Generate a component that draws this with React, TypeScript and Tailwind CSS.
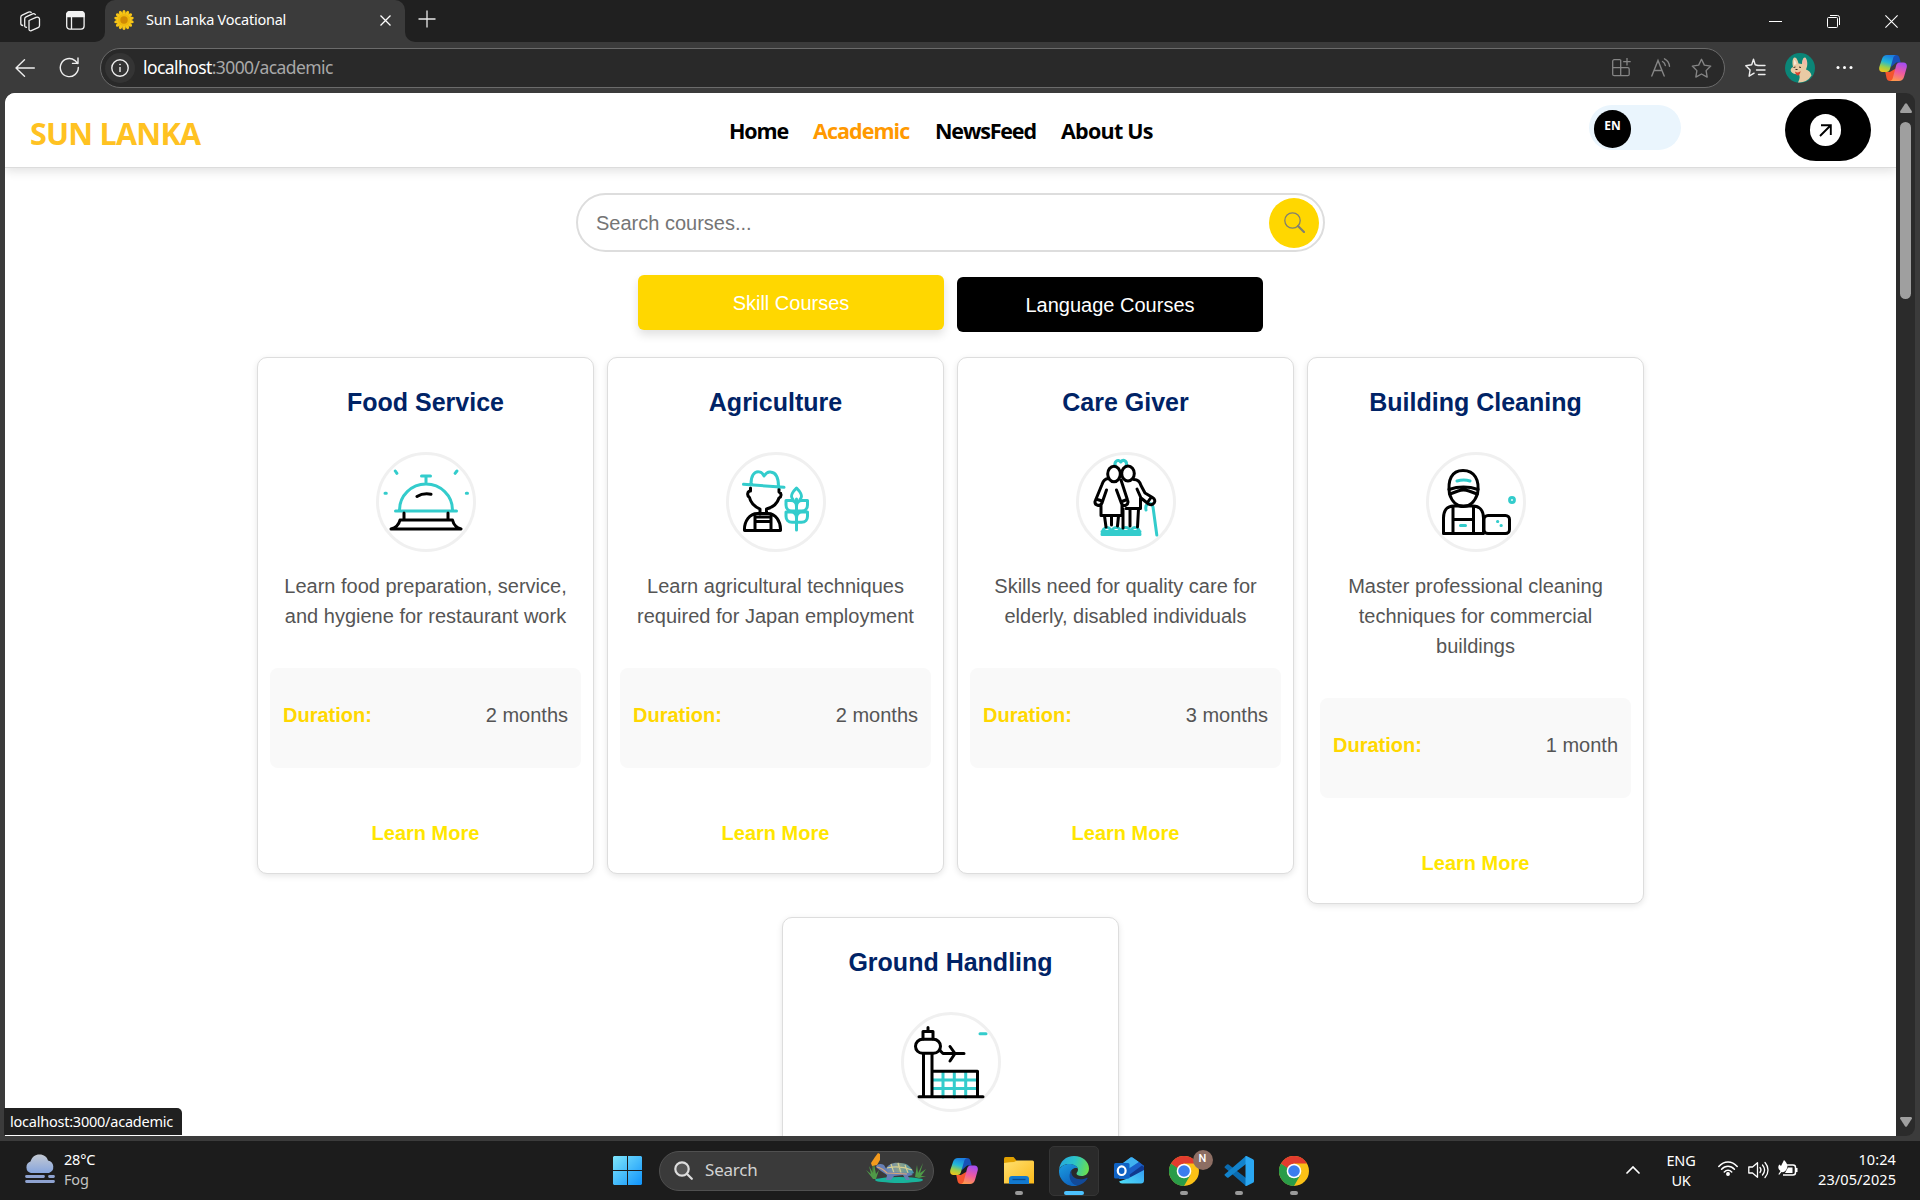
import React from "react";

const UI = "font-['Noto_Sans',sans-serif]";

const TEAL = "#33cccc";

function CopilotIcon({ id }: { id: string }) {
  return (
    <svg width="28" height="26" viewBox="0 0 28 26">
      <defs>
        <linearGradient id={`${id}a`} x1="0.5" y1="0" x2="0.2" y2="1">
          <stop offset="0" stopColor="#1b7fe0" />
          <stop offset="0.4" stopColor="#22b8d8" />
          <stop offset="0.7" stopColor="#9ccf4a" />
          <stop offset="1" stopColor="#f5c518" />
        </linearGradient>
        <linearGradient id={`${id}b`} x1="0.6" y1="0" x2="0.3" y2="1">
          <stop offset="0" stopColor="#a64df0" />
          <stop offset="0.5" stopColor="#ee5aa0" />
          <stop offset="1" stopColor="#ff9a4a" />
        </linearGradient>
      </defs>
      <path d="M12 0h5c2 0 3 1 3.500 3l1.200 4.500h-4.500L12 12z" fill="#1750b8" />
      <path d="M16 26h-5c-2 0-3-1-3.500-3L6.300 17h4.500L16 14z" fill="#f4552d" />
      <path d="M8 0h9.500c-2 .2-2.800 1.300-3.300 3L11 14c-.6 2-1.600 3-3.600 3H3.500C.8 17-.3 15 .3 12L3 4c.8-2.500 2.500-4 5-4z" fill={`url(#${id}a)`} />
      <path d="M20 26h-9.500c2-.2 2.800-1.300 3.300-3L17 11c.6-2.200 1.600-3.500 3.600-3.500h3.900c2.700 0 3.800 2 3.200 5L25 22c-.8 2.500-2.500 4-5 4z" fill={`url(#${id}b)`} />
    </svg>
  );
}

function TabBar() {
  return (
    <div className="flex h-[42px] bg-[#3b3b3b] text-white">
      <div className="flex w-[105px] items-center rounded-br-[10px] bg-[#202020] pl-5">
        <svg width="21" height="21" viewBox="0 0 21 21" fill="none" stroke="#f2f2f2" strokeWidth="1.300" strokeLinejoin="round">
          <path d="M9 9.500l7-3.200c1.500-.6 3.500 0 3.500 1.800v6.500c0 1-.4 1.700-1.400 2.100l-6.800 3c-1.300.5-2.300-.3-2.300-1.500z" />
          <path d="M7 16.200c-1.400.4-2.300-.3-2.300-1.500V8c0-1 .5-1.700 1.400-2.100l6.500-3c1.300-.5 2.600 0 3 1.200" />
          <path d="M3.200 14.500C1.800 14.500.8 13.700.8 12.500V6.200c0-1 .5-1.700 1.400-2.100L8.500 1.200c1.200-.5 2.500-.2 3 .6" />
        </svg>
        <svg className="-mt-px ml-[25px]" width="19" height="19" viewBox="0 0 19 19" fill="none" stroke="#f2f2f2" strokeWidth="1.300">
          <rect x="0.700" y="0.700" width="17.400" height="17.400" rx="3" />
          <path d="M.7 5.500V3.700a3 3 0 0 1 3-3h11.400a3 3 0 0 1 3 3v1.800z" fill="#f2f2f2" />
          <path d="M5.500 5.500v12.600" />
        </svg>
      </div>
      <div className="w-[300px] bg-[#202020]">
        <div className="flex h-full items-center rounded-t-[10px] bg-[#3b3b3b] pl-[9px] pr-[14px]">
          <svg className="-mt-0.5" width="20" height="20" viewBox="-10 -10 20 20">
            {Array.from({ length: 14 }, (_, i) => (
              <ellipse key={i} cx="0" cy="-6.500" rx="1.700" ry="3.500" fill="#f7c516" transform={`rotate(${(i * 360) / 14})`} />
            ))}
            <circle r="6" fill="#f0b90d" />
            <circle r="3.700" fill="#d08a04" />
          </svg>
          <span className={`${UI} ml-[12px] -mt-0.5 text-[14.500px] tracking-[-0.24px]`}>Sun Lanka Vocational</span>
          <svg className="-mt-px ml-auto" width="11" height="11" viewBox="0 0 11 11" stroke="#fff" strokeWidth="1.300">
            <path d="M.5.5l10 10M10.500.5l-10 10" />
          </svg>
        </div>
      </div>
      <div className="flex flex-1 items-center rounded-bl-[10px] bg-[#202020] pl-[13px] pr-[22px]">
        <svg className="-mt-1" width="18" height="18" viewBox="0 0 18 18" stroke="#e8e8e8" strokeWidth="1.300">
          <path d="M9 .5v17M.5 9h17" />
        </svg>
        <svg className="ml-auto mr-[45px]" width="13" height="13" viewBox="0 0 13 13" stroke="#fff"><path d="M0 6.500h13" /></svg>
        <svg className="mr-[45px]" width="13" height="13" viewBox="0 0 13 13" fill="none" stroke="#fff">
          <rect x="0.500" y="2.500" width="10" height="10" rx="1" />
          <path d="M3 .5h7.500a2 2 0 0 1 2 2V10" />
        </svg>
        <svg width="13" height="13" viewBox="0 0 13 13" stroke="#fff" strokeWidth="1.100"><path d="M.4.4l12.200 12.200M12.600.4L.4 12.600" /></svg>
      </div>
    </div>
  );
}

const STAR = "M10 1.200l2.700 5.600 6.100.9-4.400 4.300 1 6.100L10 15.200l-5.400 2.900 1-6.100L1.200 7.700l6.100-.9z";

function Toolbar() {
  return (
    <div className="flex h-[51px] items-center bg-[#3b3b3b] pl-[15px]">
      <svg width="20" height="18" viewBox="0 0 20 18" fill="none" stroke="#eee" strokeWidth="1.400" strokeLinecap="round" strokeLinejoin="round">
        <path d="M19.300 9H1M9.500.8L1 9l8.500 8.200" />
      </svg>
      <svg className="ml-[24px] mr-px" width="21" height="21" viewBox="0 0 21 21" fill="none" stroke="#eee" strokeWidth="1.400" strokeLinecap="round" strokeLinejoin="round">
        <path d="M19.300 10.500a9 9 0 1 1-3.300-6.900l2.800 2.800M19 1v5.400h-5.500" />
      </svg>
      <div className="ml-[19px] flex h-10 w-[1625px] items-center rounded-full border border-[#6b6b6b] bg-[#292929] pl-[4px] pr-[12px]">
        <div className="grid size-[30px] place-items-center rounded-full bg-[#343434]">
          <svg width="18" height="18" viewBox="0 0 18 18" fill="none" stroke="#eee" strokeWidth="1.400">
            <circle cx="9" cy="9" r="8.200" /><path d="M9 8v5" /><circle cx="9" cy="5.500" r="0.500" fill="#eee" strokeWidth="0.800" />
          </svg>
        </div>
        <span className={`${UI} ml-2 -mt-px text-[17.500px] tracking-[-0.58px] text-[#a8a8a8]`}><span className="text-white">localhost</span>:3000/academic</span>
        <div className="ml-auto flex items-center gap-[20px]">
          <svg width="19" height="19" viewBox="0 0 19 19" fill="none" stroke="#858585" strokeWidth="1.300" strokeLinejoin="round">
            <path d="M8.500 1.700H2.200A1.500 1.500 0 0 0 .7 3.200v13a1.500 1.500 0 0 0 1.500 1.500h13.500a1.500 1.500 0 0 0 1.500-1.500v-5a1.500 1.500 0 0 0-1.500-1.500H.7M8.700 1.700v16M15 0v7.500M11.200 3.700h7.500" />
          </svg>
          <svg width="20" height="20" viewBox="0 0 20 20" fill="none" stroke="#858585" strokeWidth="1.400" strokeLinecap="round">
            <path d="M.8 18L7 2.500 13.200 18M3 12.500h8M11.500 3.500c1.500.8 2.500 2.200 2.800 4M13.500.8c2.800 1.500 4.700 4 5 7.500" />
          </svg>
          <svg width="21" height="20" viewBox="0 0 20 19" fill="none" stroke="#858585" strokeWidth="1.300" strokeLinejoin="round"><path d={STAR} /></svg>
        </div>
      </div>
      <svg className="ml-5" width="21" height="20" viewBox="0 0 21 20" fill="none" stroke="#eee" strokeWidth="1.400" strokeLinejoin="round" strokeLinecap="round">
        <path d="M13 7.500L10.200 6.800 8.500 1.200 6.700 6.800.8 7.700l4.300 4.200-1 6.300 5-3M13.500 7.500H20M11.500 12H20M13.500 16.500H20" />
      </svg>
      <svg className="ml-[19px]" width="30" height="30" viewBox="0 0 30 30">
        <circle cx="15" cy="15" r="15" fill="#0b8577" />
        <path d="M8 14C7 9 7.500 5 9.500 4.500S13 8 13.500 10.500L17 11c0-4 1.500-7 3-6.500s3 5 2 9l-1 3c3 1 5 3 5.500 6A15 15 0 0 1 13 29.500c2-4 2-6 1-8-4 0-7-1-8-3S6 15 8 14z" fill="#e9caa4" />
        <path d="M17.500 10c0-3 1.500-5.500 2.500-5s2 4 1.300 7.500z" fill="#f3b8a8" />
        <path d="M9 7c1 0 2 2 2.500 4L9 12z" fill="#f8ead8" />
        <path d="M10 18.500c2 1.500 4.500 1.200 5.500-.7 0 3-1.500 4.700-2.700 4.700s-2.500-2-2.800-4z" fill="#d8432e" />
        <path d="M8.500 14.500l2-.5M14 14l2 .5M10.500 16.500h2" stroke="#3a2a20" strokeWidth="1" />
      </svg>
      <svg className="ml-[21px]" width="17" height="5" viewBox="0 0 17 5" fill="#fff">
        <circle cx="2" cy="2.500" r="1.500" /><circle cx="8.500" cy="2.500" r="1.500" /><circle cx="15" cy="2.500" r="1.500" />
      </svg>
      <div className="ml-[26px]"><CopilotIcon id="cpTop" /></div>
    </div>
  );
}

function SiteHeader() {
  return (
    <header className="relative flex h-[75px] shrink-0 items-start border-b border-[#dcdcdc] bg-white shadow-[0_3px_10px_rgba(0,0,0,0.12)]">
      <div className="ml-[25px] mt-[19px] w-[699px] font-['Open_Sans',sans-serif] text-[30.500px] font-bold leading-[42px] tracking-[-0.75px] text-[#ffc222]">SUN LANKA</div>
      <nav className="mt-[23px] flex whitespace-nowrap font-['Open_Sans',sans-serif] text-[21.500px] font-bold leading-[30px] text-black">
        <a className="w-[84px] tracking-[-1.1px]">Home</a>
        <a className="w-[122px] tracking-[-0.95px] text-[#ff9900]">Academic</a>
        <a className="w-[126px] tracking-[-1.15px]">NewsFeed</a>
        <a className="w-[97px] tracking-[-0.75px]">About Us</a>
      </nav>
      <div className="ml-auto mr-[104px] mt-[12px] h-[45px] w-[92px] rounded-full bg-[#eaf5fd] pl-[5px] pt-[5px]">
        <div className="grid h-[38px] w-[37px] place-items-center rounded-full bg-black pb-1.5 font-['Noto_Sans',sans-serif] text-[12px] font-bold leading-none text-white">EN</div>
      </div>
      <div className="mr-[25px] mt-[6px] grid h-[62px] w-[86px] place-items-center rounded-full bg-black pr-[5px]">
        <div className="grid h-8 w-[31px] place-items-center rounded-full bg-white">
          <svg width="13" height="13" viewBox="0 0 13 13" fill="none" stroke="#000" strokeWidth="1.900"><path d="M1 12L11.500 1.500M2 1.200h9.800V11" /></svg>
        </div>
      </div>
    </header>
  );
}

function BellArt() {
  return (
    <>
      <g stroke={TEAL}>
        <path d="M45.500 24h9M50 24v8M23.500 58a26.500 26 0 0 1 53 0M19.500 59h61M19.300 19l1.600 2.300M80.900 19l-1.800 2.300M9 41.300h1.300M90.300 41.300h1.200" />
      </g>
      <path d="M41 44.500c4-2.500 9-3.200 14-2.300M28 61v7M72 61v7M24 68h52.500c1 4.500 3.500 7.500 8.500 9H15c5-1.500 8-4.500 9-9z" stroke="#000" />
    </>
  );
}

function FarmerArt() {
  return (
    <>
      <g stroke="#000">
        <path d="M24.500 36v3c-3 0-4 4.500-1 6.500 1 5 5 9 10.500 11.500v5M53 37v3c2.500 1 3 4.500 0 6-1.500 5-5 9-12.500 11v4" />
        <path d="M18.500 78.500c-.5-9 5-17 13-17H42c7.500 0 13 8 12.500 17zM29 63v15.500M45 63v15.500M29 69.500h16M31 65h12" />
      </g>
      <g stroke={TEAL}>
        <path d="M17.500 32.300L58 35.300M25 32c0-8 3-12.500 7.500-12.300 3 0 4.500 2 5.500 4.300 2-3 4-4.500 6.500-4 6 .5 8 6 8 14.500" />
        <path d="M70.500 78V47M70.500 36c-6 6-6 9-3.500 11.500M70.500 36c6 6 6 9 3.500 11.500" />
        <path d="M70.500 59H66c-4 0-6-3-6-6v-4.500h5c4 0 5.500 3 5.500 6 0-3 1.500-6 5.500-6h5.500V53c0 3-2 6-6 6zM70.500 70.300H66c-4 0-6-3-6-6V60h5c4 0 5.500 3 5.500 6 0-3 1.500-6 5.500-6h5.500v4.300c0 3-2 6-6 6z" />
      </g>
    </>
  );
}

function CareArt() {
  return (
    <>
      <g stroke={TEAL}>
        <path d="M39.500 14.500c-2-5 2.500-8 5.200-4.500 2.800-3.500 7.300-.5 5.300 4.500" />
        <path d="M26 82.500h38M26 82.500c0-9 9.500-9 9.500-1 0-8 9.500-8 9.500 0 0-8 9.500-8 9.500 0 0-8 9.500-8 9.500 1M26 79.500h38" />
        <path d="M70 58c-1.500-7 6-9 7-3l3.800 28" />
      </g>
      <g stroke="#000">
        <ellipse cx="38" cy="22" rx="6.300" ry="7.800" />
        <ellipse cx="52" cy="21.500" rx="6.300" ry="7.500" />
        <path d="M32 26.500c-3 .5-5 2.500-6 6l-7 17c-.5 4 5 5.500 7 1.500l4.500-13M20 47l6 2M25 53v10.500h21V53M45 28l6.500 20c2 5-4 7.500-6 3.500l-5-13.500M46 49.500l5-2" />
        <path d="M58 27.500c4 0 6 2.500 7 6l4 7.500 7.500 4.500c5 3 1 9-4 6.500L65 46l-4-9M75 45.500l-3.500 5M64.500 46v10.500H50" />
        <path d="M28.500 64l1.500 11M35.500 64v9M42.500 64l-1 10M47 57v19M54 57v17M62.500 57l-1 18" />
      </g>
    </>
  );
}

function CleanerArt() {
  return (
    <>
      <g stroke="#000">
        <path d="M23.500 42c-2-14 2-23.500 13.500-23.500S54 28 51.500 42c-3 8-8 12.500-14 12.500S26 50 23.500 42z" />
        <path d="M23 37.500c9-3 20-3 29 0M24 42l8-3c4-1.500 7-1.500 11 0l8 3" />
        <path d="M17.500 81.500V66c0-8 4-12 10-12h19.500c6 0 10.500 4 10.500 12v15.500zM27 55v26.500M47.500 55v26.500M27 67.500h20.500" />
        <rect x="58" y="63.500" width="25.500" height="18" rx="4" />
      </g>
      <g stroke={TEAL}>
        <path d="M31 29c4.500-1.300 9-1.300 13 0M34.500 73.500h5M71.500 69.500h.3M75 73.500h.3" />
        <circle cx="86" cy="48" r="2.400" />
      </g>
    </>
  );
}

function AirportArt() {
  return (
    <>
      <path d="M42 60v25M53.300 60v25M64.700 60v25M32 68h44M32 76.500h44M79 21.700h6" stroke={TEAL} />
      <g stroke="#000">
        <path d="M27 15.500V19M22 27v-7.500h10V27" />
        <rect x="14.500" y="27.300" width="25" height="14" rx="7" />
        <path d="M22.500 41.500V84M31 41.500V84M31 59.200h45.500V84M18 84.700h64M39 38.500l3 3h21M49 34.500l5 7-5 7.500" />
      </g>
    </>
  );
}

type Course = { title: string; text?: string[]; duration?: string; Art: () => React.ReactElement };

const courses: Course[] = [
  { title: "Food Service", text: ["Learn food preparation, service,", "and hygiene for restaurant work"], duration: "2 months", Art: BellArt },
  { title: "Agriculture", text: ["Learn agricultural techniques", "required for Japan employment"], duration: "2 months", Art: FarmerArt },
  { title: "Care Giver", text: ["Skills need for quality care for", "elderly, disabled individuals"], duration: "3 months", Art: CareArt },
  { title: "Building Cleaning", text: ["Master professional cleaning", "techniques for commercial", "buildings"], duration: "1 month", Art: CleanerArt },
  { title: "Ground Handling", Art: AirportArt },
];

function CourseCard({ title, text, duration, Art }: Course) {
  return (
    <article className="min-h-[517px] w-[337px] rounded-[10px] border border-[#dddddd] bg-white px-3 text-center shadow-[0_2px_6px_rgba(0,0,0,0.10)]">
      <h3 className="mt-[29px] text-[25px] font-bold leading-[30px] text-[#002366]">{title}</h3>
      <div className="mx-auto mt-[35px] size-[100px] rounded-full border-[3px] border-[#f0f0f0]">
        <svg className="-ml-[3px] -mt-[3px] size-[100px]" viewBox="0 0 100 100" fill="none" strokeWidth="3" strokeLinecap="round" strokeLinejoin="round"><Art /></svg>
      </div>
      {text && (
        <div className="mt-[19px] text-[20px] leading-[30px] text-[#555555]">
          {text.map((t) => <div key={t} className="whitespace-nowrap">{t}</div>)}
        </div>
      )}
      {duration && (
        <>
          <div className="mt-[37px] flex h-[100px] justify-between rounded-[8px] bg-[#f9f9f9] px-[13px] pt-8 text-[20px] leading-[30px]">
            <span className="font-bold text-[#ffd700]">Duration:</span>
            <span className="text-[#555555]">{duration}</span>
          </div>
          <div className="mb-[25px] mt-[50px] text-[20px] font-bold leading-[30px] text-[#ffe600]">Learn More</div>
        </>
      )}
    </article>
  );
}

function Page() {
  return (
    <div className="flex h-[1043px] w-[1891px] flex-col overflow-hidden rounded-tl-[10px] bg-white font-['Liberation_Sans',Arial,sans-serif]">
      <SiteHeader />
      <div className="mx-auto mt-[25px] flex h-[59px] w-[749px] shrink-0 items-center rounded-full border-2 border-[#dddddd] pl-[18px] pr-[4px]">
        <span className="text-[20px] text-[#757575]">Search courses...</span>
        <div className="ml-auto grid size-[50px] place-items-center rounded-full bg-[#ffd700]">
          <svg width="21" height="21" viewBox="0 0 21 21" fill="none" stroke="#808070">
            <circle cx="8.500" cy="8.500" r="7.700" strokeWidth="1.300" /><path d="M14 14l6 6" strokeWidth="2.200" strokeLinecap="round" />
          </svg>
        </div>
      </div>
      <div className="mt-[23px] flex shrink-0 justify-center gap-[13px] text-[20px] text-white">
        <button className="h-[55px] w-[306px] rounded-[6px] bg-[#ffd700] shadow-[0_5px_10px_rgba(0,0,0,0.12)]">Skill Courses</button>
        <button className="mt-[2px] h-[55px] w-[306px] rounded-[6px] bg-black">Language Courses</button>
      </div>
      <main className="mt-[25px] flex flex-wrap items-start justify-center gap-[13px] px-[240px]">
        {courses.map((c) => <CourseCard key={c.title} {...c} />)}
      </main>
    </div>
  );
}

function ChromeIcon() {
  return (
    <svg width="30" height="30" viewBox="-15 -15 30 30">
      <circle r="15" fill="#fbc116" />
      <path d="M-13-7.500A15 15 0 0 0 0 15L6.500 3.700 0 0z" fill="#2a9c48" />
      <path d="M-13-7.500A15 15 0 0 1 13-7.500H0L-6.500-3z" fill="#e23b2e" />
      <circle r="7.300" fill="#fff" /><circle r="5.800" fill="#3b7ded" />
    </svg>
  );
}

function ExplorerIcon() {
  return (
    <svg width="30" height="27" viewBox="0 0 30 27">
      <defs><linearGradient id="fold" x1="0" y1="0" x2="1" y2="1"><stop offset="0" stopColor="#ffe070" /><stop offset="1" stopColor="#fbb91a" /></linearGradient></defs>
      <path d="M0 1.500Q0 0 1.500 0h8l3 3.500V10H0z" fill="#e0a000" />
      <path d="M0 6Q6 5 10 5l3-1.500h15.500q1.500 0 1.500 1.500v21.500H0z" fill="url(#fold)" />
      <path d="M5 27v-5q0-3 3-3h14q3 0 3 3v5z" fill="#1279cf" /><path d="M8.500 22.500h13" stroke="#0a4b8e" strokeWidth="1.300" />
    </svg>
  );
}

function EdgeIcon() {
  return (
    <svg width="30" height="30" viewBox="0 0 30 30">
      <defs>
        <linearGradient id="edA" x1="0" y1="0.300" x2="1" y2="0.500"><stop offset="0" stopColor="#25a8e0" /><stop offset="0.500" stopColor="#2cc4c8" /><stop offset="1" stopColor="#69e050" /></linearGradient>
        <linearGradient id="edB" x1="0" y1="0" x2="0.500" y2="1"><stop offset="0" stopColor="#1b9de0" /><stop offset="1" stopColor="#0f66c0" /></linearGradient>
      </defs>
      <path d="M0 14C1 5 7 0 15 0c9 0 15 6 15 12.500 0 5-3.500 7.500-7.500 7.500-3 0-5-1-5-2.500 0-1 1.500-1.500 1.500-4C19 10.500 15 8 10 8 5 8 1.500 10.500 0 14z" fill="url(#edA)" />
      <path d="M0 14c2-4 6-6 10-6 4.500 0 8 2 8.800 4.500C16 11 11 13 11 19c0 5 3.500 9.500 8 10.500A15 15 0 0 1 0 14z" fill="url(#edB)" />
      <path d="M12.500 14.500c-4 4-2 14.500 6.500 15 3.500-.8 7.500-3.500 9.500-7 .3-.8-.3-1-1-.6-7 3.500-16.500 0-15-7.400z" fill="#124a98" />
    </svg>
  );
}

function OutlookIcon() {
  return (
    <svg width="30" height="27" viewBox="0 0 30 27">
      <defs><linearGradient id="mail" x1="0" y1="1" x2="1" y2="0.300"><stop offset="0" stopColor="#4fe0f8" /><stop offset="1" stopColor="#38a6f2" /></linearGradient></defs>
      <path d="M5 9L16.500.6q1-.7 2 0L30 9v13H5z" fill="#1c6fd0" />
      <path d="M5 9L16.500.6q1-.7 2 0L25 5 11 14z" fill="#3fb2f0" />
      <path d="M12 14L25 5l5 4v3L15 21z" fill="#1a5fc8" />
      <path d="M15 18l13-9.500 2 1.500v5l-13 6z" fill="#10388e" />
      <path d="M30 13v10.500q0 3-3 3H8q-2 0-3-2l10-3.500z" fill="url(#mail)" />
      <rect y="6" width="15.500" height="15.500" rx="1.500" fill="#0f62c4" /><ellipse cx="7.700" cy="13.700" rx="3.900" ry="4.300" fill="none" stroke="#fff" strokeWidth="2.200" />
    </svg>
  );
}

function CodeIcon() {
  return (
    <svg width="30" height="30" viewBox="0 0 30 30">
      <path d="M.8 10.500L3 8.500q.8-.5 1.600 0L22 22v8L.8 11.800q-.7-.6 0-1.300z" fill="#0a6bb0" />
      <path d="M.8 19.500L3 21.500q.8.500 1.600 0L22 8V0L.8 18.200q-.7.600 0 1.300z" fill="#1283cc" />
      <path d="M21.500 0q.7-.2 1.500.2l6 3q1 .5 1 1.500v20.600q0 1-1 1.500l-6 3q-.8.400-1.500.200z" fill="#2aa7f2" />
    </svg>
  );
}

function TurtleArt() {
  return (
    <svg width="62" height="32" viewBox="0 0 62 32">
      <defs><linearGradient id="shell" x1="0" x2="1"><stop offset="0" stopColor="#5d7fc0" /><stop offset="0.500" stopColor="#8fa38a" /><stop offset="1" stopColor="#3f8fae" /></linearGradient></defs>
      <ellipse cx="34" cy="27" rx="24" ry="3" fill="#19b39b" />
      <path d="M8 26L1 17l5 4-2-8 4 7 1-9 2 10 3-4-3 9zM50 24l2-12 1 8 5-10-3 10 6-4-5 7 5 0-7 2z" fill="#4f9a48" />
      <path d="M8 22V11" stroke="#54953f" /><path d="M6 10l4-6 3-4 2 1v6l-3 5-5 1z" fill="#f39a1d" />
      <path d="M20 18c2-7 9-9 15-8 8 0 12 5 14 10l-5 2H22z" fill="url(#shell)" />
      <path d="M26 11l3 9M33 10l3 10M40 12l3 8M22 15q12-3 25 2" stroke="#d6cf91" fill="none" strokeWidth="1.200" />
      <path d="M11 14c0-3 5-4 8-2l4 7 22 1 3 2-5 1 2 4h-4l-3-5-9 1-3 4h-5l1-5-6-4-4-3z" fill="#667fb5" />
      <path d="M12 14q5 1 10 6l20 1" stroke="#dba777" fill="none" strokeWidth="1.200" />
    </svg>
  );
}

function TaskItem({ children, dot, active }: { children: React.ReactNode; dot?: boolean; active?: boolean }) {
  return (
    <div className="grid w-[55px] place-items-center">
      <div className={active ? "relative grid size-[50px] place-items-center rounded-[5px] border border-[#353535] bg-[#2a2a2a]" : "relative grid size-[50px] place-items-center"}>
        {children}
        {dot && <div className="absolute bottom-px h-1 w-2 rounded-full bg-[#9a9a9a]" />}
        {active && <div className="absolute bottom-0 h-1 w-5 rounded-full bg-[#4cc2ff]" />}
      </div>
    </div>
  );
}

function Taskbar() {
  return (
    <div className={`${UI} flex h-[59px] bg-[#1c1c1c] text-white`}>
      <div className="flex w-[613px] items-center pl-[25px]">
        <svg className="-mt-1" width="30" height="30" viewBox="0 0 30 30">
          <defs><linearGradient id="fog" x1="0" y1="0" x2="0" y2="1"><stop offset="0" stopColor="#c3c9d3" /><stop offset="1" stopColor="#87a5dd" /></linearGradient></defs>
          <path d="M6 19a6 6 0 0 1-.5-11.500C7 3 10 .5 14.500.5S22 3 23 6.500A6.500 6.500 0 0 1 24 19z" fill="url(#fog)" />
          <path d="M1.500 22.500h17M24.500 22.500h4M1.500 27.500h27" stroke="#8ea2d0" strokeWidth="2.800" strokeLinecap="round" />
        </svg>
        <div className="-mt-1 ml-[9px] text-[14.500px] leading-5 tracking-[-0.2px]"><div>28°C</div><div className="text-[#c4c4c4]">Fog</div></div>
      </div>
      <div className="flex items-center">
        <svg width="29" height="29" viewBox="0 0 29 29">
          <defs><linearGradient id="win" gradientUnits="userSpaceOnUse" x1="0" y1="0" x2="29" y2="29"><stop offset="0" stopColor="#7fe6fb" /><stop offset="1" stopColor="#0f93fb" /></linearGradient></defs>
          <path d="M1 0h13v14H0V1zM15 0h13l1 1v13H15zM0 15h14v14H1l-1-1zM15 15h14v13l-1 1H15z" fill="url(#win)" />
        </svg>
        <div className="ml-[17px] mr-[2px] flex h-10 w-[275px] items-center rounded-full border border-[#505050] bg-[#3a3a3a] pl-[14px] pr-[6px]">
          <svg width="19" height="19" viewBox="0 0 19 19" fill="none" stroke="#ddd" strokeWidth="2.200" strokeLinecap="round"><circle cx="8" cy="8" r="6.700" fill="#555" /><path d="M13 13l4.800 4.800" /></svg>
          <span className="-mt-px ml-[12px] text-[17px] tracking-[-0.2px] text-[#d2d2d2]">Search</span>
          <div className="ml-auto -mt-1"><TurtleArt /></div>
        </div>
        <TaskItem><CopilotIcon id="cpBar" /></TaskItem>
        <TaskItem dot><ExplorerIcon /></TaskItem>
        <TaskItem active><EdgeIcon /></TaskItem>
        <TaskItem><OutlookIcon /></TaskItem>
        <TaskItem dot>
          <ChromeIcon />
          <div className="absolute -right-1 top-1 grid size-5 place-items-center rounded-full bg-[#8d6e63] font-['Roboto',sans-serif] text-[11px] font-medium">N</div>
        </TaskItem>
        <TaskItem dot><CodeIcon /></TaskItem>
        <TaskItem dot><ChromeIcon /></TaskItem>
      </div>
      <div className="ml-auto flex items-center pr-[24px] text-[14.500px] leading-5 tracking-[-0.2px]">
        <svg className="-mt-0.5" width="14" height="8" viewBox="0 0 14 8" fill="none" stroke="#fff" strokeWidth="1.700" strokeLinecap="round"><path d="M1 7l6-6 6 6" /></svg>
        <div className="-mt-0.5 ml-[24px] w-[34px] text-center"><div>ENG</div><div>UK</div></div>
        <svg className="-mt-1 ml-[20px]" width="20" height="15" viewBox="0 0 20 15" fill="none" stroke="#fff" strokeWidth="1.500" strokeLinecap="round">
          <path d="M.8 5.500C6-.5 14-.5 19.200 5.500M3.600 8.300c3.600-4 9.200-4 12.800 0M6.300 11c2.200-2.300 5.200-2.300 7.400 0" /><circle cx="10" cy="13" r="1.200" fill="#fff" />
        </svg>
        <svg className="-mt-0.5 ml-[10px]" width="21" height="18" viewBox="0 0 21 18" fill="none" stroke="#fff" strokeWidth="1.300" strokeLinejoin="round" strokeLinecap="round">
          <path d="M.8 6h3.700L9.500 1.700v14.600L4.500 12H.8zM12 6.500c1.200 1.500 1.200 3.500 0 5M14.500 4c2.500 3 2.500 7 0 10M17 1.500c4 4.500 4 10.500 0 15" />
        </svg>
        <svg className="ml-[9px] -mt-1" width="20" height="17" viewBox="0 0 20 17">
          <path d="M8 5h7q2.500 0 2.500 2.500v5Q17.500 15 15 15H5" fill="none" stroke="#fff" strokeWidth="1.500" /><path d="M18 8h1.500v4H18zM10 7.500h4.500v5.500H7z" fill="#fff" />
          <path d="M6 0c3 3 4.500 6 2.500 9.500-1 2-3.500 3-5 2.500L1 15l-.5-1 2-3C-.5 9 0 6 1.500 4.500L3 6z" fill="#fff" />
        </svg>
        <div className="-mt-1 ml-[20px] w-[78px] whitespace-nowrap text-right tracking-[0.1px]"><div>10:24</div><div>23/05/2025</div></div>
      </div>
    </div>
  );
}

export default function App() {
  return (
    <div className="relative flex h-[1200px] w-[1920px] flex-col overflow-hidden bg-[#3b3b3b]">
      <TabBar />
      <Toolbar />
      <div className="flex h-[1048px] pl-[5px]">
        <Page />
        <div className="flex h-[1043px] w-[19px] flex-col items-center rounded-r-[9px] bg-[#2b2b2b] pb-[9px] pt-[10px]">
          <svg width="12" height="10" viewBox="0 0 12 10" fill="#9f9f9f"><path d="M5 .8q1-1 2 0l5 7.700q0 1.500-1 1.500H1Q0 10 0 8.500z" /></svg>
          <div className="mt-[9px] h-[177px] w-[11px] rounded-full bg-[#9f9f9f]" />
          <svg className="mt-auto" width="12" height="10" viewBox="0 0 12 10" fill="#9f9f9f"><path d="M5 9.200q1 1 2 0l5-7.700Q12 0 11 0H1Q0 0 0 1.500z" /></svg>
        </div>
      </div>
      <div className={`${UI} absolute left-[4px] top-[1108px] flex h-[27px] w-[178px] items-center rounded-tr-[5px] bg-[#202020] pl-[6px] text-[14.500px] tracking-[-0.23px] text-white`}>localhost:3000/academic</div>
      <Taskbar />
    </div>
  );
}
